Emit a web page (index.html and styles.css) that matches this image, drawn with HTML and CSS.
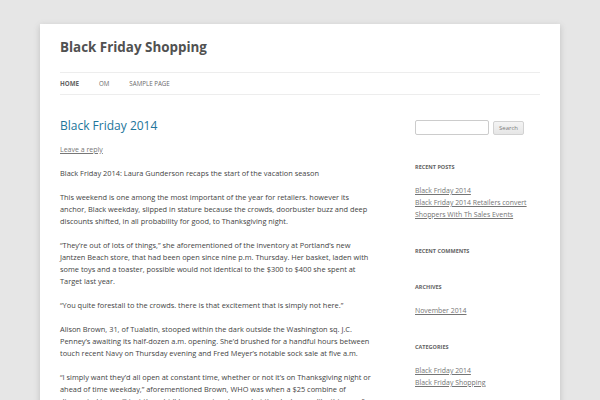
FILE: index.html
```html
<!DOCTYPE html>
<html lang="en">
<head>
    <meta charset="UTF-8">
    <title>Black Friday Shopping</title>
    <link rel="stylesheet" href="styles.css">
</head>
<body>
    <div class="site">
        <header class="site-header">
            <h1 class="site-title">Black Friday Shopping</h1>
            <nav class="main-nav">
                <ul>
                    <li class="current"><a href="#">Home</a></li>
                    <li><a href="#">om</a></li>
                    <li><a href="#">Sample Page</a></li>
                </ul>
            </nav>
        </header>

        <div class="main">
            <div class="content">
                <h2 class="entry-title">Black Friday 2014</h2>
                <a class="reply" href="#">Leave a reply</a>
                <div class="entry">
                    <p>Black Friday 2014: Laura Gunderson recaps the start of the vacation season</p>
                    <p>This weekend is one among the most important of the year for retailers. however its anchor, Black weekday, slipped in stature because the crowds, doorbuster buzz and deep discounts shifted, in all probability for good, to Thanksgiving night.</p>
                    <p>&ldquo;They&rsquo;re out of lots of things,&rdquo; she aforementioned of the inventory at Portland&rsquo;s new Jantzen Beach store, that had been open since nine p.m. Thursday. Her basket, laden with some toys and a toaster, possible would not identical to the $300 to $400 she spent at Target last year.</p>
                    <p>&ldquo;You quite forestall to the crowds. there is that excitement that is simply not here.&rdquo;</p>
                    <p>Alison Brown, 31, of Tualatin, stooped within the dark outside the Washington sq. J.C. Penney&rsquo;s awaiting its half-dozen a.m. opening. She&rsquo;d brushed for a handful hours between touch recent Navy on Thursday evening and Fred Meyer&rsquo;s notable sock sale at five a.m.</p>
                    <p>&ldquo;I simply want they&rsquo;d all open at constant time, whether or not it&rsquo;s on Thanksgiving night or ahead of time weekday,&rdquo; aforementioned Brown, WHO was when a $25 combine of discounted jeans. &ldquo;I just thought I&rsquo;d come out and see what the deals were like this year.&rdquo;</p>
                </div>
            </div>

            <aside class="sidebar">
                <form class="search">
                    <input type="text" class="search-field">
                    <button type="button" class="search-btn">Search</button>
                </form>

                <section class="widget">
                    <h3 class="widget-title">Recent Posts</h3>
                    <ul>
                        <li><a href="#">Black Friday 2014</a></li>
                        <li><a href="#">Black Friday 2014 Retailers convert Shoppers With Th Sales Events</a></li>
                    </ul>
                </section>

                <section class="widget">
                    <h3 class="widget-title">Recent Comments</h3>
                </section>

                <section class="widget">
                    <h3 class="widget-title">Archives</h3>
                    <ul>
                        <li><a href="#">November 2014</a></li>
                    </ul>
                </section>

                <section class="widget">
                    <h3 class="widget-title">Categories</h3>
                    <ul>
                        <li><a href="#">Black Friday 2014</a></li>
                        <li><a href="#">Black Friday Shopping</a></li>
                    </ul>
                </section>
            </aside>
        </div>
    </div>
</body>
</html>
```

FILE: styles.css
```css
body {
    margin: 0;
    background-color: #e6e6e6;
    font-family: "Open Sans", "DejaVu Sans", sans-serif;
    color: #444;
    height: 400px;
    overflow: hidden;
}

.site {
    background-color: #fff;
    margin: 24px 40px 0;
    padding: 0 20px;
    box-shadow: 0 2px 6px rgba(100, 100, 100, 0.3);
    min-height: 400px;
}

.site-header {
    padding-top: 13px;
}

.site-title {
    margin: 0;
    font-size: 13.4px;
    line-height: 20px;
    font-weight: bold;
    color: #515151;
}

.main-nav {
    margin-top: 15px;
    border-top: 1px solid #ededed;
    border-bottom: 1px solid #ededed;
}

.main-nav ul {
    display: flex;
    gap: 20px;
    margin: 0;
    padding: 0;
    list-style: none;
}

.main-nav li a {
    display: block;
    font-size: 6.2px;
    line-height: 21px;
    text-transform: uppercase;
    text-decoration: none;
    color: #6a6a6a;
}

.main-nav li.current a {
    font-weight: bold;
    color: #636363;
}

.main {
    display: flex;
    justify-content: space-between;
    padding-top: 21px;
}

.content {
    width: 312px;
}

.entry-title {
    margin: 0;
    font-size: 12px;
    line-height: 20px;
    font-weight: normal;
    color: #21759b;
}

.reply {
    display: block;
    margin-top: 8px;
    font-size: 7px;
    line-height: 12px;
    color: #777;
}

.entry p {
    margin: 11px 0 12px;
    font-size: 7.4px;
    line-height: 12px;
}

.sidebar {
    width: 125px;
    padding-top: 4px;
}

.search {
    display: flex;
    align-items: center;
    gap: 4px;
}

.search-field {
    width: 74px;
    height: 15px;
    box-sizing: border-box;
    border: 1px solid #ccc;
    border-radius: 2px;
    padding: 0;
}

.search-btn {
    height: 14px;
    padding: 0 5px;
    font-family: inherit;
    font-size: 6px;
    color: #7c7c7c;
    background: linear-gradient(#f4f4f4, #e6e6e6);
    border: 1px solid #d2d2d2;
    border-radius: 2px;
}

.widget {
    margin-top: 24px;
}

.search + .widget {
    margin-top: 26px;
}

.widget-title {
    margin: 0;
    font-size: 5.5px;
    line-height: 12px;
    font-weight: bold;
    text-transform: uppercase;
    color: #636363;
}

.widget ul {
    margin: 12px 0 0;
    padding: 0;
    list-style: none;
}

.widget li {
    font-size: 6.9px;
    line-height: 12px;
}

.widget li a {
    color: #757575;
}
```
